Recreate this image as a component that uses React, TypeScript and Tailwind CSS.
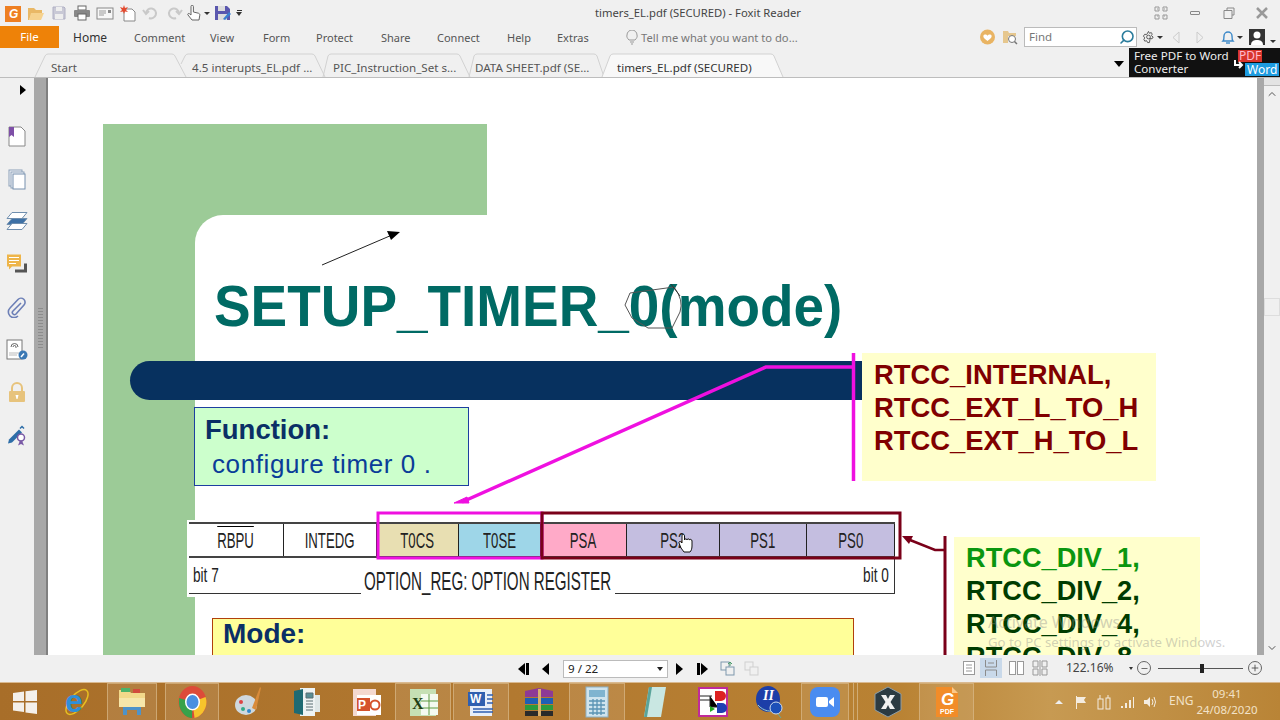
import type { ReactNode } from 'react'
import { ChevronDown, ChevronUp, Minus, Plus, Search } from 'lucide-react'

const font = "font-['Noto_Sans',sans-serif]"
const arial = "font-['Liberation_Sans',Arial,sans-serif]"

function Caret() {
  return <span className="ml-[2px] inline-block h-0 w-0 border-x-[3px] border-t-[3px] border-x-transparent border-t-[#333]" />
}

function QuickBar() {
  return (
    <div className="flex items-center gap-[5px] pl-[5px]">
      <svg width="17" height="17" viewBox="0 0 17 17"><rect width="16" height="16" y="1" fill="#ee7f22" /><text x="4" y="13" fontSize="12" fontWeight="700" fontStyle="italic" fill="#fff" fontFamily="Liberation Sans">G</text></svg>
      <svg width="18" height="16" viewBox="0 0 18 16"><path d="M1 3h6l2 2h6v3H5l-3 7H1z" fill="#e9b866" /><path d="M4 8h13l-3 7H2z" fill="#f6d28e" /></svg>
      <svg width="18" height="16" viewBox="0 0 18 16"><path d="M3 2h11l1 1v11H3z" fill="#c9c9d6" stroke="#b0b0c4" /><rect x="6" y="2" width="6" height="4" fill="#eee" /><rect x="5" y="9" width="8" height="5" fill="#eee" /></svg>
      <svg width="18" height="16" viewBox="0 0 18 16"><rect x="5" y="1" width="8" height="4" fill="#fff" stroke="#666" /><rect x="1" y="5" width="16" height="7" rx="1" fill="#888" /><rect x="5" y="9" width="8" height="6" fill="#fff" stroke="#666" /></svg>
      <svg width="18" height="16" viewBox="0 0 18 16"><rect x="1" y="3" width="16" height="11" fill="#f7f7f7" stroke="#888" /><path d="M3 6h7M3 8h7M3 10h5" stroke="#999" /><rect x="12" y="5" width="3" height="3" fill="#888" /></svg>
      <svg width="18" height="17" viewBox="0 0 18 17"><path d="M5 4h8l3 3v9H5z" fill="#fff" stroke="#888" /><path d="M5 0l1 3 3-1-2 3 2 2-3-.5L5 9 4 6.500 1 7l2-2-2-3 3 1z" fill="#e34a2f" /></svg>
      <svg width="18" height="16" viewBox="0 0 18 16" fill="none" stroke="#c9c9c9" strokeWidth="2"><path d="M4 8a5 5 0 1 1 3 5" /><path d="M1 5l3 4 3-3" /></svg>
      <svg width="18" height="16" viewBox="0 0 18 16" fill="none" stroke="#c9c9c9" strokeWidth="2"><path d="M14 8a5 5 0 1 0-3 5" /><path d="M17 5l-3 4-3-3" /></svg>
      <span className="-ml-[2px] -mr-[2px] flex items-center">
        <svg width="16" height="17" viewBox="0 0 16 17" fill="#fff" stroke="#666"><path d="M5 1.500a1.200 1.200 0 0 1 2.400 0V7l5 1.200c1 .3 1.600 1 1.400 2l-.8 4.800H6L2 10c-.8-1 .4-2 1.400-1.300L5 10z" /></svg>
        <Caret />
      </span>
      <svg className="ml-[1px]" width="17" height="16" viewBox="0 0 17 16"><path d="M1 1h12l3 3v11H1z" fill="#5a57ae" /><rect x="4" y="1" width="7" height="5" fill="#ddd" /><rect x="4" y="9" width="9" height="6" fill="#ddd" /><path d="M9 14l6-7 2 2-6 6z" fill="#3b7fd0" /></svg>
      <span className="flex flex-col items-center gap-[1px]">
        <span className="h-[1px] w-[5px] bg-[#333]" />
        <span className="h-0 w-0 border-x-[3px] border-t-[4px] border-x-transparent border-t-[#333]" />
      </span>
    </div>
  )
}

function TitleBar() {
  return (
    <div className="relative flex h-[26px] items-center justify-between bg-[#f0f0f0]">
      <QuickBar />
      <span className="absolute left-[595px] top-[5px] text-[11.25px] leading-[16px] text-[#444]">timers_EL.pdf (SECURED) - Foxit Reader</span>
      <div className="flex items-center gap-[21px] pr-[12px] text-[#777]">
        <svg width="14" height="14" viewBox="0 0 14 14" fill="none" stroke="#999"><path d="M1 1h4v4H1zM9 1h4v4H9zM1 9h4v4H1zM9 9h4v4H9z" /><path d="M3 3h1M10 3h1M3 10h1M10 10h1" /></svg>
        <span className="ml-[1px] h-[4px] w-[10px] rounded-[1px] border border-[#888]" />
        <svg className="ml-[2px]" width="12" height="12" viewBox="0 0 12 12" fill="none" stroke="#888"><path d="M4 3V1h7v7H9" /><path d="M1 3.500h8v8H1z" /></svg>
        <svg width="12" height="12" viewBox="0 0 12 12" fill="none" stroke="#999" strokeWidth="2.500"><path d="M1 1l10 10M11 1L1 11" /></svg>
      </div>
    </div>
  )
}

const ribbonTabs = [
  { label: 'Comment', w: 'w-[76px]' },
  { label: 'View', w: 'w-[53px]' },
  { label: 'Form', w: 'w-[53px]' },
  { label: 'Protect', w: 'w-[65px]' },
  { label: 'Share', w: 'w-[56px]' },
  { label: 'Connect', w: 'w-[70px]' },
  { label: 'Help', w: 'w-[50px]' },
]

function Ribbon() {
  return (
    <div className="relative flex h-[26px] items-start bg-[#f0f0f0]">
      <div className="flex h-[22px] w-[59px] items-center justify-center bg-[#ee8208] text-[11.5px] text-white">File</div>
      <span className="ml-[14px] w-[61px] pt-[3px] text-[12px] leading-[18px] text-[#333]">Home</span>
      {ribbonTabs.map((t) => (
        <span key={t.label} className={`${t.w} pt-[3px] text-[11px] leading-[18px] text-[#555]`}>{t.label}</span>
      ))}
      <span className="w-[68px] pt-[3px] text-[11px] leading-[18px] text-[#555]">Extras</span>
      <svg className="mt-[4px]" width="14" height="15" viewBox="0 0 14 15" fill="none" stroke="#999"><path d="M4 10c-2-2-2.500-3.500-2-5a5 5 0 0 1 10 0c.5 1.500 0 3-2 5z" /><path d="M5 12h4M6 14h2" /></svg>
      <span className="ml-[2px] pt-[3px] text-[11.2px] leading-[18px] text-[#777]">Tell me what you want to do...</span>

      <div className="absolute left-[979px] top-0 flex h-[22px] items-center">
        <svg width="17" height="16" viewBox="0 0 17 16"><circle cx="8.500" cy="8" r="7.500" fill="#e9b463" /><path d="M8.500 12C5 9.500 4 8 4.500 6.500c.5-1.300 3-1.500 4 .2 1-1.700 3.500-1.500 4-.2.500 1.500-.5 3-4 5.500z" fill="#fff" /></svg>
        <svg className="ml-[6px]" width="16" height="16" viewBox="0 0 16 16"><path d="M1 2h5l1 2h7v3H6v7H1z" fill="#e6c78e" /><circle cx="10" cy="10" r="3.500" fill="#fff" stroke="#777" /><path d="M12.500 12.500L15 15" stroke="#777" strokeWidth="1.500" /></svg>
        <div className="ml-[6px] flex h-[20px] w-[113px] items-center justify-between border border-[#bbb] bg-white pl-[4px] pr-[1px]">
          <span className="text-[11.5px] text-[#777]">Find</span>
          <Search size={16} color="#2a7c9c" strokeWidth={2.4} className="-scale-x-100" />
        </div>
        <svg className="ml-[5px]" width="13" height="14" viewBox="0 0 14 14" fill="none" stroke="#555"><circle cx="7" cy="7" r="2" /><path d="M7 1l1 2 2-.8 1 1.800-1 1.500 2 1.500-1.200 2-2-.5L8 13H6l-1-2-2 .5L2 9.500 3 8 1.500 6 3 4l2 .5z" /></svg>
        <Caret />
        <svg className="ml-[8px]" width="10" height="15" viewBox="0 0 10 15" fill="none" stroke="#ccc"><path d="M8 2L2 7.500 8 13z" /></svg>
        <svg className="ml-[14px]" width="10" height="15" viewBox="0 0 10 15" fill="none" stroke="#ccc"><path d="M2 2l6 5.500L2 13z" /></svg>
        <svg className="ml-[16px]" width="14" height="16" viewBox="0 0 14 16" fill="none" stroke="#3b88c8" strokeWidth="1.400"><path d="M2 12c1-1 1-3 1-5a4 4 0 0 1 8 0c0 2 0 4 1 5z" /><path d="M5 14h4" /></svg>
        <Caret />
        <svg className="ml-[6px]" width="17" height="17" viewBox="0 0 17 17"><rect width="16" height="16" fill="#333" /><circle cx="8" cy="6" r="3.500" fill="#fff" /><path d="M2 16c0-4 3-5 6-5s6 1 6 5z" fill="#fff" /></svg>
        <span className="ml-[2px]"><Caret /></span>
      </div>
    </div>
  )
}

function TabLabel({ label, w, pl, active }: { label: string; w: string; pl?: string; active?: boolean }) {
  return (
    <div className={`relative flex h-[24px] items-center pt-[8px] ${w} ${pl ?? ''} ${active ? 'text-[#333]' : 'text-[#555]'}`}>
      <span className="whitespace-nowrap text-[11.6px]">{label}</span>
    </div>
  )
}

function TabRow() {
  return (
    <div className="relative flex h-[26px] items-end border-b border-[#bdbdbd] bg-[#f0f0f0] pb-[1px]">
      <svg className="absolute left-0 top-0" width="1130" height="26" viewBox="0 0 1130 26" fill="none" stroke="#d2d2d2">
        <path d="M35 25l10-21q1-2 3-2h124q2 0 3 2l11 21" />
        <path d="M181 12l4-8q1-2 3-2h124q2 0 3 2l10 21" />
        <path d="M323 25l5-21q1-2 3-2h126q2 0 3 2l10 21" />
        <path d="M469 25l5-21q1-2 3-2h117q2 0 3 2l7 21" />
        <path d="M602 25l8-21q1-2 3-2h158q2 0 3 2l9 21" fill="#f8f8f8" />
      </svg>
      <TabLabel label="Start" w="w-[192px]" pl="pl-[51px]" />
      <TabLabel label="4.5 interupts_EL.pdf ..." w="w-[141px]" />
      <TabLabel label="PIC_Instruction_Set s..." w="w-[142px]" />
      <TabLabel label="DATA SHEET.pdf (SE..." w="w-[142px]" />
      <TabLabel label="timers_EL.pdf (SECURED)" w="w-[149px]" active />
      <svg className="mb-[4px]" width="9" height="9" viewBox="0 0 9 9" stroke="#222" strokeWidth="1.500"><path d="M1 1l7 7M8 1L1 8" /></svg>
      <span className="ml-[339px] mb-[9px] h-0 w-0 border-x-[5px] border-t-[6px] border-x-transparent border-t-black" />
      <div className="absolute left-[1129px] top-[-4px] flex h-[29px] w-[151px] bg-[#111] pl-[5px] text-[11.6px] leading-[13px] text-[#eee]">
        <div className="flex flex-col pt-[1px]">
          <span>Free PDF to Word</span>
          <span>Converter</span>
        </div>
        <span className="absolute left-[109px] top-[2px] bg-[#d8342c] px-[1px] text-[12px] leading-[12px] text-[#fbc]">PDF</span>
        <span className="absolute left-[116px] top-[15px] bg-[#1d9be0] px-[2px] text-[12px] leading-[13px] text-white">Word</span>
        <svg className="absolute left-[103px] top-[12px]" width="12" height="12" viewBox="0 0 12 12" fill="none" stroke="#fff" strokeWidth="2"><path d="M3 0v5h7" /><path d="M7 2l3 3-3 3" /></svg>
      </div>
    </div>
  )
}

function LeftRail() {
  return (
    <div className="flex w-[34px] shrink-0 flex-col items-center bg-[#f0f0f0]">
      <span className="ml-[12px] mt-[7px] h-0 w-0 border-y-[5px] border-l-[6px] border-y-transparent border-l-black" />
      <div className="mt-[31px] flex flex-col items-center gap-[21.7px]">
        <svg width="18" height="21" viewBox="0 0 18 21"><path d="M1 1h12l4 4v15H1z" fill="#fff" stroke="#888" /><path d="M1 1h5v10l-2.500-2L1 11z" fill="#7e4fa7" /></svg>
        <svg width="18" height="21" viewBox="0 0 18 21"><rect x="1" y="1" width="13" height="16" fill="#f4f7fb" stroke="#8ba0b8" /><rect x="3" y="3" width="13" height="16" fill="#f4f7fb" stroke="#8ba0b8" /><rect x="5" y="5" width="12" height="15" fill="#fff" stroke="#7790ae" /></svg>
        <svg width="22" height="21" viewBox="0 0 22 20" fill="#fff" stroke="#6f8eae"><path d="M6 1h15l-5 6H1z" /><path d="M6 7h15l-5 6H1z" fill="#3e71a6" /><path d="M6 12h15l-5 6H1z" /></svg>
        <svg width="21" height="21" viewBox="0 0 21 20"><path d="M0 0h14v12H5l-3 3v-3H0z" fill="#eeb54a" /><path d="M2 3h10M2 6h10M2 9h7" stroke="#fff" /><path d="M8 15h9v-6h3v9H8z" fill="#555" /></svg>
        <svg width="20" height="21" viewBox="0 0 20 21" fill="none" stroke="#6c7fb6" strokeWidth="1.600"><path d="M14 6L6 14a2 2 0 0 0 3 3l8-9a4 4 0 0 0-6-5.500L3 11a5.500 5.500 0 0 0 8 8" /></svg>
        <svg width="22" height="21" viewBox="0 0 22 21"><rect x="1" y="1" width="15" height="19" fill="#fff" stroke="#777" /><path d="M5 8a3.500 3.500 0 0 1 7 0M7 8a1.500 1.500 0 0 1 3 0v1" fill="none" stroke="#666" /><path d="M3 14h10M3 16h8" stroke="#bbb" /><circle cx="17" cy="16" r="4.500" fill="#3a78b4" /><path d="M15 18l3-3.500" stroke="#fff" strokeWidth="1.500" /></svg>
        <svg width="18" height="21" viewBox="0 0 18 21"><path d="M4 9V6a5 5 0 0 1 10 0v3" fill="none" stroke="#e7c37c" strokeWidth="2" /><rect x="1" y="9" width="16" height="11" rx="1" fill="#e7c37c" /><path d="M7.500 13h3l-1 4h-1z" fill="#fff" /></svg>
        <svg width="20" height="21" viewBox="0 0 20 20"><path d="M1 18l1-4L12 4l3 3L5 17z" fill="#2e6ea8" /><path d="M13 3l2-2 2 2" stroke="#2e6ea8" strokeWidth="1.500" fill="none" /><circle cx="14" cy="12" r="3.500" fill="#fff" stroke="#7a5aa6" strokeWidth="1.500" /><path d="M11 20l2-5h2l2 5-3-1.500z" fill="#7a5aa6" /></svg>
      </div>
    </div>
  )
}

function Splitter() {
  return (
    <div className="flex w-[14px] shrink-0 items-start justify-center border-r-[2px] border-[#808080] bg-[#a8a8a8] pt-[230px]">
      <div className="h-[42px] w-[5px] bg-[repeating-linear-gradient(180deg,#8c8c8c_0_1px,transparent_1px_3px)]" />
    </div>
  )
}

const regCells: { label: ReactNode; w: string; bg: string }[] = [
  { label: <span className="border-t border-black pt-[1px]">RBPU</span>, w: 'w-[95px]', bg: 'bg-white' },
  { label: 'INTEDG', w: 'w-[93px]', bg: 'bg-white' },
  { label: 'T0CS', w: 'w-[82px]', bg: 'bg-[#e8dfb2]' },
  { label: 'T0SE', w: 'w-[82px]', bg: 'bg-[#9ed6e8]' },
  { label: 'PSA', w: 'w-[86px]', bg: 'bg-[#ffaac8]' },
  { label: 'PS2', w: 'w-[93px]', bg: 'bg-[#c4bee0]' },
  { label: 'PS1', w: 'w-[87px]', bg: 'bg-[#c4bee0]' },
  { label: 'PS0', w: 'w-[88px]', bg: 'bg-[#c4bee0]' },
]

function RegisterTable() {
  return (
    <div className="absolute left-[187px] top-[520px] h-[77px] w-[710px] bg-white pl-[2px] pt-[2px] text-[#222]">
      <div className="flex h-[36px] w-[706px] border-y-2 border-[#444]">
        {regCells.map((c, i) => (
          <div key={i} className={`flex ${c.w} items-center justify-center border-r border-[#222] pt-[1px] text-[22px] leading-[24px] ${c.bg}`}>
            <span className="inline-block scale-x-[0.6] whitespace-nowrap">{c.label}</span>
          </div>
        ))}
      </div>
      <div className="relative h-[36px] w-[706px] border-r border-[#333]">
        <span className="absolute left-[4px] top-[5px] inline-block origin-left scale-x-[0.68] whitespace-nowrap text-[20px] leading-[24px]">bit 7</span>
        <span className="absolute right-[5px] top-[5px] inline-block origin-right scale-x-[0.68] whitespace-nowrap text-[20px] leading-[24px]">bit 0</span>
        <div className="absolute bottom-0 left-0 flex w-[706px] items-end">
          <span className="h-[1px] w-[172px] bg-[#333]" />
          <span className="ml-[3px] w-[250px] text-[25px] leading-[26px]">
            <span className="inline-block origin-left scale-x-[0.605] whitespace-nowrap">OPTION_REG: OPTION REGISTER</span>
          </span>
          <span className="ml-[1px] h-[1px] flex-1 bg-[#333]" />
        </div>
      </div>
    </div>
  )
}

function Annotations() {
  return (
    <svg className="pointer-events-none absolute left-0 top-0" width="1280" height="720" viewBox="0 0 1280 720" fill="none">
      <path d="M322 265L392 235" stroke="#222" strokeWidth="1" />
      <path d="M400 232l-13-1 4 9z" fill="#000" />
      <path d="M630 293L674 287Q684 300 680 312L672 328L648 328L632 318L625 305Z" stroke="#555" strokeWidth="1" />
      <path d="M671 284l9 12" stroke="#333" strokeWidth="1" />
      <path d="M853.500 353v128" stroke="#ef10e0" strokeWidth="3.500" />
      <path d="M853 367H766L462 502" stroke="#ef10e0" strokeWidth="3.500" />
      <path d="M454 503l13-6 2 6z" fill="#ef10e0" stroke="#ef10e0" strokeWidth="1" />
      <rect x="378" y="513" width="164" height="45" stroke="#ef10e0" strokeWidth="3" />
      <rect x="542" y="513" width="358" height="45" stroke="#7a0019" strokeWidth="3" />
      <path d="M945 536v120" stroke="#7a0019" strokeWidth="3" />
      <path d="M945 550H935L910 540" stroke="#7a0019" strokeWidth="2.500" />
      <path d="M902 536l11 0-4 8z" fill="#7a0019" />
      {/* hand cursor */}
      <g transform="translate(678 533)">
        <path d="M3 15L1 10c-.5-1.500 1-2 2-1l1 1V3c0-2 2.500-2 2.500 0v4c0-1.500 2.500-1.500 2.500 0 0-1.500 2.500-1.500 2.500 0 0-1 2.500-1 2.500 1v5c0 3-1 5-2 6H6z" fill="#fff" stroke="#111" />
      </g>
    </svg>
  )
}

function SlideCanvas() {
  return (
    <div className={`absolute left-[-48px] top-[-78px] h-[720px] w-[1280px] ${arial}`}>
      <div className="absolute left-[103px] top-[124px] h-[600px] w-[384px] bg-[#9ccb97]" />
      <div className="absolute left-[195px] top-[215px] h-[500px] w-[900px] rounded-tl-[28px] bg-white" />
      <div className="absolute left-[130px] top-[361px] h-[39px] w-[732px] rounded-l-[20px] bg-[#07315f]" />
      <h1 className="absolute left-[214px] top-[273px] origin-left scale-x-[0.963] whitespace-nowrap text-[57px] font-bold leading-[66px] text-[#006a64]">SETUP_TIMER_0(mode)</h1>

      <div className="absolute left-[194px] top-[407px] h-[79px] w-[275px] border border-[#1d3fa0] bg-[#ccffcc] pl-[10px] pt-[5px]">
        <p className="text-[27.5px] font-bold leading-[34px] text-[#0a2f66]">Function:</p>
        <p className="pl-[7px] pt-[1px] text-[26px] leading-[32px] tracking-[0.6px] text-[#0a3d98]">configure timer 0 .</p>
      </div>

      <div className="absolute left-[862px] top-[353px] h-[128px] w-[294px] bg-[#ffffcc] pl-[12px] pt-[5px] text-[27.4px] font-bold leading-[33px] text-[#800000]">
        <p>RTCC_INTERNAL,</p>
        <p>RTCC_EXT_L_TO_H</p>
        <p>RTCC_EXT_H_TO_L</p>
      </div>

      <RegisterTable />

      <div className="absolute left-[212px] top-[618px] h-[60px] w-[642px] border border-[#b0400c] bg-[#ffff99] pl-[10px] text-[28px] font-bold leading-[30px] text-[#0a2f66]">Mode:</div>

      <div className="absolute left-[954px] top-[537px] h-[150px] w-[246px] bg-[#ffffcc] pl-[12px] pt-[4px] text-[27.2px] font-bold leading-[33px] text-[#003c00]">
        <p className="text-[#0a960f]">RTCC_DIV_1,</p>
        <p>RTCC_DIV_2,</p>
        <p>RTCC_DIV_4,</p>
        <p>RTCC_DIV_8,</p>
      </div>

      <Annotations />

      <div className={`absolute left-[988px] top-[612px] text-[#8a8a8a]/40 ${font}`}>
        <p className="text-[16px] leading-[20px]">Activate Windows</p>
        <p className="text-[13.2px] leading-[20px]">Go to PC settings to activate Windows.</p>
      </div>
    </div>
  )
}

function ScrollRail() {
  return (
    <div className="flex w-[23px] shrink-0">
      <div className="w-[7px] bg-[#a8a8a8]" />
      <div className="flex flex-1 flex-col items-center bg-[#f0f0f0]">
        <div className="h-[8px] w-full border-b border-[#bbb] bg-[#e3e3e3]" />
        <ChevronUp size={12} strokeWidth={2} color="#555" className="mt-[2px]" />
        <div className="mt-[198px] h-[18px] w-full border border-[#ddd] bg-[#f0f0f0]" />
        <div className="flex-1" />
        <ChevronDown size={12} strokeWidth={2} color="#555" className="mb-[1px]" />
      </div>
    </div>
  )
}

function StatusBar() {
  return (
    <div className="relative flex h-[27px] items-center bg-[#f0f0f0] pl-[518px] text-[#222]">
      <span className="flex items-center gap-[1px]"><span className="h-0 w-0 border-y-[6px] border-r-[7px] border-y-transparent border-r-black" /><span className="h-[12px] w-[3px] bg-black" /></span>
      <span className="ml-[13px] h-0 w-0 border-y-[6px] border-r-[7px] border-y-transparent border-r-black" />
      <div className="ml-[14px] flex h-[18px] w-[105px] items-center justify-between border border-[#bbb] bg-white px-[4px] text-[11.6px]">
        <span>9 / 22</span>
        <span className="h-0 w-0 border-x-[3px] border-t-[4px] border-x-transparent border-t-[#222]" />
      </div>
      <span className="ml-[8px] h-0 w-0 border-y-[6px] border-l-[7px] border-y-transparent border-l-black" />
      <span className="ml-[14px] flex items-center gap-[1px]"><span className="h-[12px] w-[3px] bg-black" /><span className="h-0 w-0 border-y-[6px] border-l-[7px] border-y-transparent border-l-black" /></span>
      <svg className="ml-[12px]" width="15" height="15" viewBox="0 0 15 15" fill="none" stroke="#7e98ad"><rect x="1" y="1" width="8" height="8" /><rect x="6" y="6" width="8" height="8" fill="#f0f0f0" /><path d="M10 1v4M8 3l2-2 2 2" stroke="#4a9a6a" /></svg>
      <svg className="ml-[9px]" width="15" height="15" viewBox="0 0 15 15" fill="none" stroke="#cfcfcf"><rect x="1" y="1" width="8" height="8" /><rect x="6" y="6" width="8" height="8" fill="#f0f0f0" /></svg>

      <div className="absolute left-[963px] top-[3px] flex items-center">
        <svg width="12" height="14" viewBox="0 0 12 14" fill="#fff" stroke="#999"><rect x=".5" y=".5" width="11" height="13" /><path d="M3 4h6M3 7h6M3 10h6" /></svg>
        <span className="ml-[5px] flex h-[20px] w-[22px] items-center justify-center bg-[#c9d9ea]">
          <svg width="12" height="16" viewBox="0 0 12 16" fill="none" stroke="#8c8c8c"><path d="M.5 0v7h11V0M.5 16v-6h11v6M3 3h6" /></svg>
        </span>
        <svg className="ml-[7px]" width="15" height="14" viewBox="0 0 15 14" fill="#fff" stroke="#999"><rect x=".5" y=".5" width="6" height="13" /><rect x="8.500" y=".5" width="6" height="13" /></svg>
        <svg className="ml-[8px]" width="16" height="16" viewBox="0 0 16 16" fill="none" stroke="#999"><path d="M1 1h5v6H1zM10 1h5v6h-5zM1 9h5v6H1zM10 9h5v6h-5zM8 0v16" /></svg>
      </div>
      <span className="absolute left-[1066px] top-[4px] text-[12px] leading-[18px] text-[#444]">122.16%</span>
      <div className="absolute left-[1129px] top-[4px] flex h-[18px] items-center">
        <span className="h-0 w-0 border-x-[2px] border-t-[3px] border-x-transparent border-t-[#333]" />
        <span className="ml-[4px] flex h-[14px] w-[14px] items-center justify-center rounded-full border border-[#666]"><Minus size={9} color="#444" /></span>
        <div className="relative ml-[7px] h-[1px] w-[85px] bg-[#555]">
          <span className="absolute left-[42px] top-[-4px] h-[9px] w-[4px] bg-[#222]" />
        </div>
        <span className="ml-[5px] flex h-[14px] w-[14px] items-center justify-center rounded-full border border-[#666]"><Plus size={10} color="#444" /></span>
      </div>
    </div>
  )
}

function Slot({ w, active, children }: { w: string; active?: boolean; children: ReactNode }) {
  return (
    <div className={`flex h-[38px] shrink-0 items-center justify-center ${w} ${active ? 'border border-[#d8b888]/70 bg-white/10' : ''}`}>{children}</div>
  )
}

function Taskbar() {
  return (
    <div className="relative flex h-[38px] items-center border-t border-[#d9b990] bg-[linear-gradient(90deg,#a86e29,#b27930_40%,#b98233_70%,#c79a52_82%,#b98436)] pl-[2px]">
      <Slot w="w-[45px]">
        <svg width="26" height="26" viewBox="0 0 26 26" fill="#f4f0ea"><path d="M1 4l11-1.500V12H1zM13.500 2.300L25 1v11H13.500zM1 13.500h11V23L1 21.500zM13.500 13.500H25V25l-11.500-1.500z" /></svg>
      </Slot>
      <Slot w="w-[60px]">
        <svg width="30" height="32" viewBox="0 0 30 32"><ellipse cx="15" cy="16" rx="15" ry="7" transform="rotate(-50 15 16)" fill="none" stroke="#e8c020" strokeWidth="1.500" /><text x="3" y="26" fontSize="32" fontWeight="700" fill="#2f8fd8" fontFamily="Liberation Sans">e</text></svg>
      </Slot>
      <Slot w="w-[50px]" active>
        <svg width="28" height="30" viewBox="0 0 28 30"><path d="M1 3h10l2 3h14v14H1z" fill="#f2d98a" /><rect x="3" y="1" width="9" height="4" fill="#4bb36a" /><rect x="15" y="2" width="7" height="4" fill="#d24b3c" /><path d="M5 19h18v9h-4v-5H9v5H5z" fill="#4e93c9" /><rect x="1" y="11" width="26" height="9" fill="#f7e7aa" /></svg>
      </Slot>
      <div className="ml-[8px]"><Slot w="w-[54px]" active>
        <svg width="29" height="34" viewBox="0 0 29 34"><ellipse cx="14.500" cy="17" rx="14" ry="16" fill="#dd4b39" /><path d="M14.500 17L1 13v6c1 8 7 14 13 14z" fill="#37a24a" /><path d="M14.500 17l2 16c6-1 12-8 12-16 0-2-.5-4-1-5z" fill="#f6c42c" /><ellipse cx="14.500" cy="17" rx="7.500" ry="8.500" fill="#fff" /><ellipse cx="14.500" cy="17" rx="6" ry="7" fill="#4a8fe0" /></svg>
      </Slot></div>
      <Slot w="w-[58px]">
        <svg width="28" height="32" viewBox="0 0 28 32"><ellipse cx="12" cy="19" rx="11" ry="10" fill="#cfd8de" /><circle cx="7" cy="16" r="2" fill="#d44" /><circle cx="9" cy="23" r="2" fill="#3a8" /><circle cx="15" cy="25" r="2" fill="#38c" /><path d="M18 22L26 1l1 1-5 22z" fill="#d98b3a" /></svg>
      </Slot>
      <Slot w="w-[60px]">
        <svg width="28" height="30" viewBox="0 0 28 30"><path d="M7 1h15v28H7z" fill="#eef3f3" /><path d="M1 4l9-2v26l-9-2z" fill="#1e6a72" /><path d="M13 6h7v5h-7zM13 14h7M13 17h7M13 20h7M13 23h7" stroke="#5a6f72" fill="#5a8f96" /><path d="M22 8h5v17h-5z" fill="#dfe7e7" /></svg>
      </Slot>
      <Slot w="w-[58px]">
        <svg width="29" height="30" viewBox="0 0 29 30"><path d="M1 2h23v27H1z" fill="#f4d9d0" /><path d="M5 8h24v20H5z" fill="#fff" /><rect x="5" y="11" width="13" height="13" fill="#d5532d" /><text x="6" y="22" fontSize="12" fontWeight="700" fill="#fff" fontFamily="Liberation Sans">P</text><circle cx="23" cy="18" r="4.500" fill="none" stroke="#d5532d" strokeWidth="2" /></svg>
      </Slot>
      <Slot w="w-[56px]" active>
        <svg width="29" height="30" viewBox="0 0 29 30"><path d="M1 2h26v27H1z" fill="#c6e0b4" /><path d="M12 7h17v21H12z" fill="#f4faf0" /><path d="M20 7v21M12 14h17M12 21h17" stroke="#5c9c42" /><text x="3" y="22" fontSize="16" fontWeight="700" fill="#1f3f14" fontFamily="Liberation Serif">X</text></svg>
      </Slot>
      <div className="ml-[2px]"><Slot w="w-[56px]" active>
        <svg width="28" height="30" viewBox="0 0 28 30"><path d="M3 2h22v27H3z" fill="#e8eef8" /><rect x="1" y="5" width="17" height="14" fill="#2f5fb0" /><text x="3" y="16" fontSize="12" fontWeight="700" fill="#fff" fontFamily="Liberation Sans">W</text><path d="M20 8h6M20 12h6M20 16h6M6 22h20M6 25h20" stroke="#2f5fb0" strokeWidth="1.500" /></svg>
      </Slot></div>
      <Slot w="w-[60px]">
        <svg width="32" height="30" viewBox="0 0 32 30"><path d="M2 4l14-3 14 3v6H2z" fill="#8e3a96" /><path d="M2 11h28v6H2z" fill="#1f5fb4" /><path d="M2 18h28v5H2z" fill="#2c9a3c" /><path d="M2 24h28v5H2z" fill="#2a2a2a" /><path d="M15 2h3v27h-3z" fill="#d8b070" /></svg>
      </Slot>
      <Slot w="w-[56px]" active>
        <svg width="24" height="32" viewBox="0 0 24 32"><rect x="1" y="1" width="22" height="30" fill="#cfe4ee" stroke="#8bb0c4" /><rect x="4" y="4" width="16" height="7" fill="#7fb4d0" /><path d="M4 15h16M4 19h16M4 23h16M4 27h16M8 13v16M12 13v16M16 13v16" stroke="#5a93b4" strokeWidth="1.300" /></svg>
      </Slot>
      <Slot w="w-[60px]">
        <svg width="24" height="32" viewBox="0 0 24 32"><path d="M6 1h17l-5 30H1z" fill="#c9e7e2" /><path d="M6 1L1 31l3 0L9 1z" fill="#5aa49a" /></svg>
      </Slot>
      <Slot w="w-[56px]">
        <svg width="30" height="30" viewBox="0 0 30 30"><rect x="1" y="1" width="28" height="28" fill="#fff" stroke="#c02a9a" strokeWidth="2" /><path d="M2 9h12M2 13h10M12 9v11h8" stroke="#222" /><path d="M17 4h6a4 4 0 0 1 0 10h-6z" fill="#d22" /><path d="M12 19l5 3-5 3z" fill="#2a2" /><path d="M19 16h5a4 4 0 0 1 0 10h-5z" fill="#1f3fb4" /></svg>
      </Slot>
      <Slot w="w-[58px]">
        <svg width="30" height="34" viewBox="0 0 30 34"><ellipse cx="13" cy="14" rx="12" ry="13" fill="#1c3ea8" /><path d="M3 20c5 6 14 8 18 4" stroke="#9cc" fill="none" /><text x="8" y="15" fontSize="14" fontWeight="700" fontStyle="italic" fill="#fff" fontFamily="Liberation Serif">II</text><circle cx="21" cy="23" r="6" fill="#1c4fb8" stroke="#cde" /><path d="M23 29l3 4" stroke="#6a9" /></svg>
      </Slot>
      <div className="ml-[2px]"><Slot w="w-[48px]" active>
        <svg width="30" height="30" viewBox="0 0 30 30"><rect width="30" height="30" rx="8" fill="#4a8cf0" /><rect x="6" y="10" width="12" height="10" rx="2" fill="#fff" /><path d="M19 14l5-4v10l-5-4z" fill="#fff" /></svg>
      </Slot></div>
      <div className="ml-[4px] h-[38px] w-[1px] bg-[#e0c8a0]/60" />
      <div className="ml-[3px] h-[38px] w-[1px] bg-[#e0c8a0]/60" />
      <Slot w="w-[59px]">
        <svg width="30" height="32" viewBox="0 0 30 32"><path d="M15 1l13 7v16l-13 7-13-7V8z" fill="#2c3b42" stroke="#8e9ea6" /><path d="M8 9h5l2 4 2-4h5l-4.500 7 4.500 7h-5l-2-4-2 4H8l4.500-7z" fill="#f0f0f0" /></svg>
      </Slot>
      <div className="ml-[2px]"><Slot w="w-[55px]" active>
        <svg width="26" height="32" viewBox="0 0 26 32"><path d="M2 1h16l6 6v24H2z" fill="#f28c28" /><path d="M18 1l6 6h-6z" fill="#fbc98a" /><text x="7" y="19" fontSize="17" fontWeight="700" fontStyle="italic" fill="#fff" fontFamily="Liberation Sans">G</text><text x="6" y="28" fontSize="7" fontWeight="700" fill="#fff" fontFamily="Liberation Sans">PDF</text></svg>
      </Slot></div>

      <div className="absolute left-[1055px] top-[0] flex h-[38px] items-center gap-[9px] text-[#f2e6d4]">
        <span className="h-0 w-0 border-x-[4px] border-b-[4px] border-x-transparent border-b-[#eee]" />
        <svg className="ml-[2px]" width="14" height="14" viewBox="0 0 14 14" fill="#f4ece0"><path d="M2 1h1v13H2zM3 2h9l-2 3 2 3H3z" /></svg>
        <svg width="14" height="16" viewBox="0 0 14 16" fill="none" stroke="#f4ece0"><rect x="1" y="5" width="5" height="10" /><rect x="9" y="4" width="4" height="11" /><path d="M3 1v4M11 1v3" /></svg>
        <svg width="14" height="12" viewBox="0 0 14 12" fill="#f4ece0"><path d="M1 10h2v2H1zM5 7h2v5H5zM9 4h2v8H9zM13 1h1v11h-1z" /></svg>
        <svg width="14" height="14" viewBox="0 0 14 14" fill="#f4ece0"><path d="M1 5h3l3-3v10L4 9H1z" /><path d="M9 4q2 3 0 6M11 2q3 5 0 10" stroke="#f4ece0" fill="none" /></svg>
      </div>
      <span className="absolute left-[1169px] top-[9px] text-[12px] leading-[18px] text-[#f2e2c8]">ENG</span>
      <div className="absolute left-[1199px] top-[3px] flex w-[56px] flex-col items-center text-[11.5px] leading-[16px] text-[#f2e2c8]">
        <span>09:41</span>
        <span>24/08/2020</span>
      </div>
    </div>
  )
}

export default function App() {
  return (
    <div className={`flex h-[720px] w-[1280px] flex-col overflow-hidden ${font}`}>
      <TitleBar />
      <Ribbon />
      <TabRow />
      <main className="flex min-h-0 flex-1">
        <LeftRail />
        <Splitter />
        <div className="relative min-w-0 flex-1 overflow-hidden bg-white">
          <SlideCanvas />
        </div>
        <ScrollRail />
      </main>
      <StatusBar />
      <Taskbar />
    </div>
  )
}
